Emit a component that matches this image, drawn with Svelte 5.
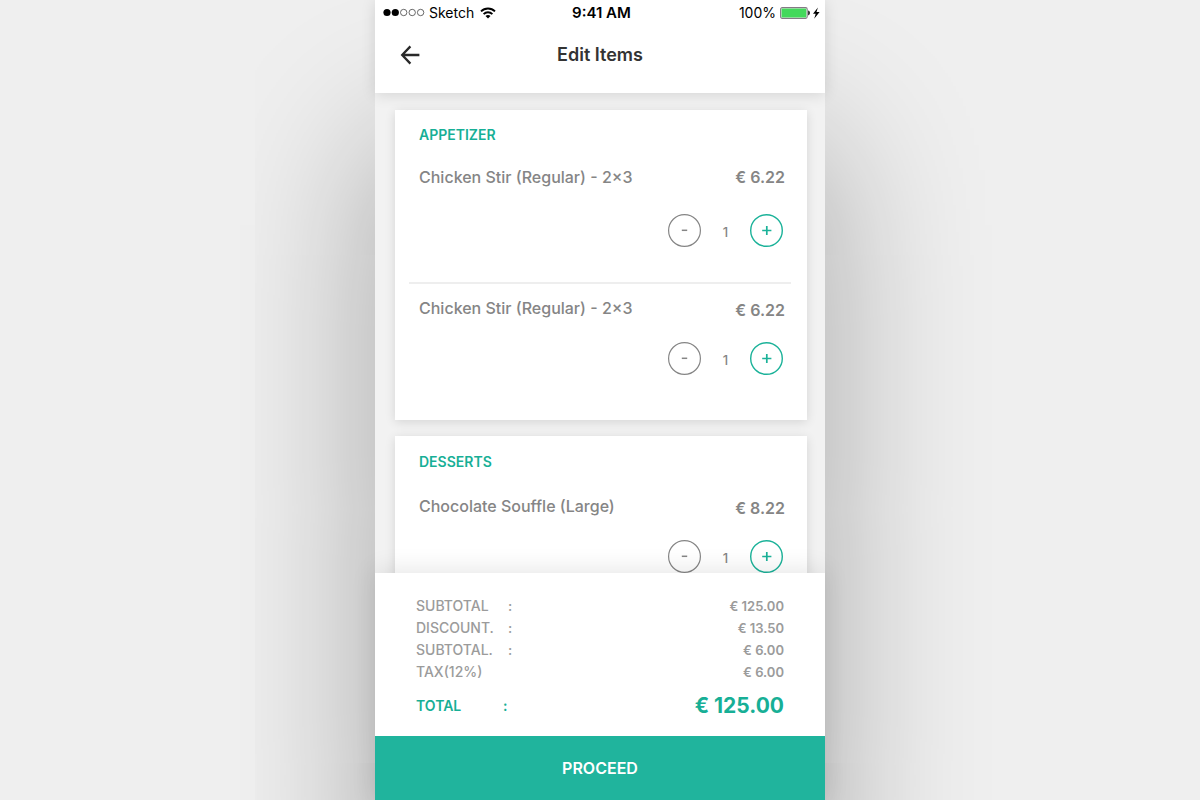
<script>
  let sections = $state([
    {
      title: 'APPETIZER',
      items: [
        { name: 'Chicken Stir (Regular) - 2×3', price: '€ 6.22', count: 1 },
        { name: 'Chicken Stir (Regular) - 2×3', price: '€ 6.22', count: 1, compact: true }
      ]
    },
    {
      title: 'DESSERTS',
      roomy: true,
      items: [{ name: 'Chocolate Souffle (Large)', price: '€ 8.22', count: 1, compact: true }]
    }
  ]);

  const totals = [
    { label: 'SUBTOTAL', colon: true, value: '€ 125.00' },
    { label: 'DISCOUNT.', colon: true, value: '€ 13.50' },
    { label: 'SUBTOTAL.', colon: true, value: '€ 6.00' },
    { label: 'TAX(12%)', colon: false, value: '€ 6.00' }
  ];
</script>

<div class="page">
  <main class="phone">
    <header>
      <div class="status">
        <div class="carrier">
          <svg width="42" height="9" viewBox="0 0 42 9" aria-hidden="true">
            <circle cx="4" cy="4.5" r="3.6" />
            <circle cx="12.3" cy="4.5" r="3.6" />
            <g fill="none" stroke="#444" stroke-width="0.8">
              <circle cx="20.7" cy="4.5" r="3.2" />
              <circle cx="29.2" cy="4.5" r="3.2" />
              <circle cx="37.6" cy="4.5" r="3.2" />
            </g>
          </svg>
          <span>Sketch</span>
          <svg class="wifi" width="16" height="12" viewBox="0 0 16 12" aria-hidden="true">
            <g fill="none" stroke="#000" stroke-width="1.9">
              <path d="M1 4.4C4.9.6 11.1.6 15 4.4" />
              <path d="M3.6 7.1C6.1 4.7 9.9 4.7 12.4 7.1" />
            </g>
            <path d="M5.5 8.9c1.4-1.3 3.6-1.3 5 0L8 11.4z" />
          </svg>
        </div>
        <span class="clock">9:41 AM</span>
        <div class="power">
          <span>100%</span>
          <svg width="40" height="12" viewBox="0 0 40 12" aria-hidden="true">
            <rect x="0.6" y="0.6" width="26.6" height="10.8" rx="1.6" fill="#fff" stroke="#857985" stroke-width="1.1" />
            <rect x="1.5" y="1.5" width="24.8" height="9" rx="0.6" fill="#43d95b" />
            <path d="M28.1 3.6c1.2.2 1.8 1.2 1.8 2.4s-.6 2.2-1.8 2.4z" fill="#222" />
            <path d="M37.9.4 33 6.7h2.7l-1.5 5.1L39.6 5h-3.1z" />
          </svg>
        </div>
      </div>
      <nav>
        <button class="back" aria-label="Back">
          <svg width="20" height="20" viewBox="0 0 20 20" fill="none" stroke="#292929" stroke-width="2.3">
            <path d="M19.4 10H2.3M10.4 1.4 2.2 10l8.2 8.6" />
          </svg>
        </button>
        <h1>Edit Items</h1>
      </nav>
    </header>

    <div class="list">
      {#each sections as section}
        <section class="card" class:roomy={section.roomy}>
          <h2>{section.title}</h2>
          {#each section.items as item}
            <article class="item" class:compact={item.compact}>
              <div class="line">
                <h3>{item.name}</h3>
                <span class="price">{item.price}</span>
              </div>
              <div class="stepper">
                <button aria-label="Remove one" onclick={() => (item.count = Math.max(0, item.count - 1))}>
                  <svg width="33" height="33" viewBox="0 0 33 33" fill="none" stroke="currentColor">
                    <circle cx="16.5" cy="16.5" r="15.9" stroke-width="1.2" />
                    <path d="M13.8 16.3h5.4" stroke-width="1.5" />
                  </svg>
                </button>
                <output>{item.count}</output>
                <button class="add" aria-label="Add one" onclick={() => (item.count += 1)}>
                  <svg width="33" height="33" viewBox="0 0 33 33" fill="none" stroke="currentColor">
                    <circle cx="16.5" cy="16.5" r="15.8" stroke-width="1.4" />
                    <path d="M12.2 16.5h9.2M16.8 11.9v9.2" stroke-width="1.7" />
                  </svg>
                </button>
              </div>
            </article>
          {/each}
        </section>
      {/each}
    </div>

    <footer>
      <dl>
        {#each totals as row}
          <div class="row">
            <dt><span class="label">{row.label}</span>{#if row.colon}<span>:</span>{/if}</dt>
            <dd>{row.value}</dd>
          </div>
        {/each}
        <div class="row total">
          <dt><span class="label">TOTAL</span><span>:</span></dt>
          <dd>€ 125.00</dd>
        </div>
      </dl>
      <button class="proceed">PROCEED</button>
    </footer>
  </main>
</div>

<style>
  :global(body) {
    background: #efefef;
  }

  .page {
    display: flex;
    justify-content: center;
    height: 100vh;
    overflow: hidden;
    font-family: Inter, 'Liberation Sans', sans-serif;
    color: #858585;
  }

  h1, h2, h3, dl, dd {
    margin: 0;
  }

  button {
    border: 0;
    padding: 0;
    background: none;
    color: inherit;
    font: inherit;
    cursor: pointer;
  }

  svg {
    display: block;
  }

  .phone {
    display: flex;
    flex-direction: column;
    width: 100%;
    max-width: 450px;
    background: #f2f2f2;
    box-shadow: 0 145px 160px rgba(0, 0, 0, 0.33);
  }

  header {
    position: relative;
    z-index: 1;
    background: #fff;
    box-shadow: 0 2px 14px rgba(0, 0, 0, 0.12);
  }

  .status {
    display: grid;
    grid-template-columns: 1fr auto 1fr;
    align-items: center;
    height: 25px;
    padding: 0 5px 0 8px;
    color: #000;
    font-size: 14px;
  }

  .carrier, .power {
    display: flex;
    align-items: center;
    gap: 4px;
  }

  .wifi {
    margin-left: 2px;
  }

  .power {
    justify-content: flex-end;
  }

  .clock {
    font-size: 15px;
    font-weight: 600;
  }

  nav {
    display: grid;
    grid-template-columns: 20px 1fr 20px;
    align-items: center;
    height: 60px;
    padding: 0 25px 8px;
  }

  h1 {
    color: #333;
    font-size: 18px;
    font-weight: 600;
    line-height: 20px;
    text-align: center;
  }

  .list {
    display: flex;
    flex: 1;
    flex-direction: column;
    gap: 16px;
    min-height: 0;
    overflow: hidden;
    padding: 17px 18px 0 20px;
  }

  .card {
    flex: none;
    padding: 15px 16px 45px 14px;
    background: #fff;
    box-shadow: 0 2px 10px rgba(0, 0, 0, 0.12);
  }

  .roomy {
    padding-top: 16px;
  }

  h2 {
    margin: 0 10px 8px;
    color: #17af96;
    font-size: 14px;
    font-weight: 600;
    line-height: 20px;
  }

  .roomy h2 {
    margin-bottom: 10px;
  }

  .item {
    padding: 12px 6px 0 10px;
  }

  .item + .item {
    margin-top: 35px;
    border-top: 2px solid #eee;
  }

  .line {
    display: flex;
    justify-content: space-between;
    margin-bottom: 25px;
    line-height: 24px;
  }

  .compact .line {
    margin-bottom: 22px;
  }

  h3, .price {
    font-size: 16px;
    font-weight: 500;
    line-height: 24px;
  }

  .price {
    font-weight: 600;
  }

  .compact .price {
    padding-top: 2px;
    margin-bottom: -2px;
  }

  .stepper {
    display: flex;
    align-items: center;
    justify-content: flex-end;
    padding-right: 2px;
  }

  output {
    width: 49px;
    padding-top: 2px;
    font-size: 13px;
    font-weight: 500;
    text-align: center;
  }

  .add {
    color: #1bb299;
  }

  footer {
    position: relative;
    z-index: 1;
    background: #fff;
    box-shadow: 0 -2px 24px rgba(0, 0, 0, 0.11);
  }

  dl {
    padding: 22px 41px 16px;
    color: #9b9b9b;
    font-size: 14px;
    font-weight: 500;
  }

  .row {
    display: flex;
    justify-content: space-between;
    line-height: 22px;
  }

  .row dd {
    font-size: 13px;
    font-weight: 600;
  }

  .label {
    display: inline-block;
    width: 92px;
  }

  .total {
    margin-top: 9px;
    color: #17af96;
    font-weight: 600;
    line-height: 28px;
  }

  .total .label {
    width: 87px;
  }

  .total dd {
    font-size: 21px;
    font-weight: 700;
  }

  .proceed {
    display: block;
    width: 100%;
    height: 64px;
    background: #20b49d;
    color: #fff;
    font-size: 16px;
    font-weight: 600;
  }
</style>
